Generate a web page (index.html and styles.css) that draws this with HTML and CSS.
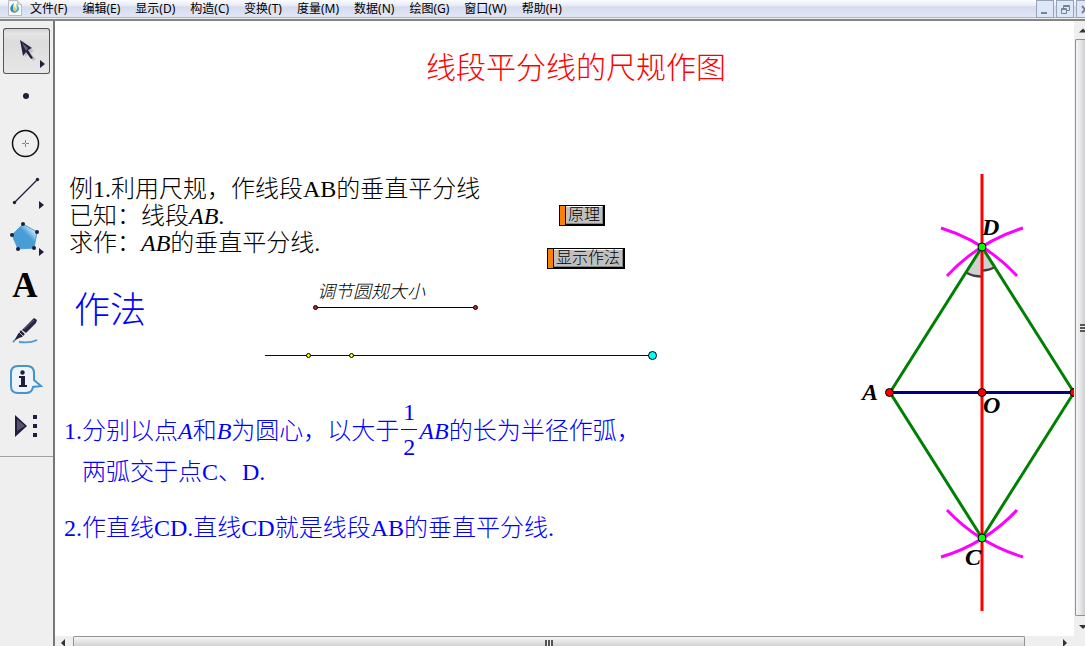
FILE: index.html
```html
<!DOCTYPE html>
<html lang="zh-CN">
<head>
<meta charset="utf-8">
<title>线段平分线的尺规作图</title>
<link rel="stylesheet" href="styles.css">
</head>
<body>
<header class="menubar">
  <svg class="doc-icon" viewBox="0 0 14 16" aria-hidden="true">
    <path d="M.5.5h9l4 4v11H.5z" fill="#f8f8f8" stroke="#b9bcc4"/>
    <path d="M9.500.5v4h4" fill="#ddd" stroke="#c4c4c4"/>
    <path d="M6 3C2 6 1 9 4 12c2 1 4 1 5-1-3 0-5-2-3-8z" fill="#2f86bd"/>
    <path d="M8 4c4 3 4 6 1 8-2 1-3 0-4-1 3 0 5-2 3-7z" fill="#48b8c4"/>
    <path d="M6 6c-2 3-1 5 1 5s2-3-1-5z" fill="#f5cf4b"/>
  </svg>
  <nav class="menus">
    <button>文件(F)</button><button>编辑(E)</button><button>显示(D)</button><button>构造(C)</button><button>变换(T)</button><button>度量(M)</button><button>数据(N)</button><button>绘图(G)</button><button>窗口(W)</button><button>帮助(H)</button>
  </nav>
  <div class="window-buttons">
    <button aria-label="最小化"><svg viewBox="0 0 16 16"><path d="M4 11h6v2H4z" fill="#7a828e"/></svg></button>
    <button aria-label="还原"><svg viewBox="0 0 16 16" fill="none" stroke="#7a828e"><path d="M6.500 7V4.500h6v5H10M6 5.500h7M4.500 7.500h5v5h-5zM4 8.500h6"/></svg></button>
    <button aria-label="关闭"><svg viewBox="0 0 16 16"><path d="M5 5l6 7M11 5l-6 7" stroke="#7a828e" stroke-width="2"/></svg></button>
  </div>
</header>
<main class="workspace">
  <aside class="toolbar">
    <div class="tools">
      <button class="tool selected" aria-label="移动箭头工具"><svg viewBox="0 0 47 46">
        <path d="M19 15l12 8-4 2 6 6-3 2-5-7-3 3z" fill="#888" opacity=".35"/>
        <path d="M17 12l12 8-4 2 5 8-2 1-5-7-3 4z" fill="#26213f"/>
        <path d="M19 15l6 5-2 3z" fill="#67647a"/><path d="M37 32l5 4-5 4z" fill="#211d3c"/></svg></button>
      <button class="tool" aria-label="点工具"><svg viewBox="0 0 47 46"><circle cx="23" cy="21" r="3" fill="#211d3c"/></svg></button>
      <button class="tool" aria-label="圆工具"><svg viewBox="0 0 47 46" fill="none"><circle cx="22.500" cy="21.500" r="13" stroke="#111" stroke-width="1.500"/><path d="M22.500 18v3m0 1v3M19 21.500h3m1 0h3" stroke="#4695cb"/></svg></button>
      <button class="tool" aria-label="线段工具"><svg viewBox="0 0 47 46"><path d="M11.500 33.500l23-23" stroke="#211d3c" stroke-width="1.200"/><circle cx="11.500" cy="33.500" r="1.700" fill="#211d3c"/><circle cx="34.500" cy="10.500" r="1.700" fill="#211d3c"/><path d="M36 32l5 4-5 4z" fill="#211d3c"/></svg></button>
      <button class="tool" aria-label="多边形工具"><svg viewBox="0 0 47 46">
        <defs><linearGradient id="polygon-fill" x1="1" y1="0" x2="0" y2="1"><stop offset=".15" stop-color="#e1f1fb"/><stop offset=".42" stop-color="#489dd6"/></linearGradient></defs>
        <path d="M20 8l14 8-3 16-16 1L9 19z" fill="url(#polygon-fill)" stroke="#4da0d4"/>
        <g fill="#211d3c"><circle cx="20" cy="8" r="2"/><circle cx="34" cy="16" r="2"/><circle cx="31" cy="32" r="2"/><circle cx="15" cy="33" r="2"/><circle cx="9" cy="19" r="2"/><path d="M36 32l5 4-5 4z"/></g></svg></button>
      <button class="tool letter" aria-label="文字工具">A</button>
      <button class="tool" aria-label="标记工具"><svg viewBox="0 0 47 46">
        <path d="M31 8l3 2-1 3-10 10-4-3z" fill="#292542"/><path d="M18 20l4 4-3 3-3 1-5 3 4-7z" fill="#25213d"/>
        <path d="M16 22l4 4M18 20l4 4" stroke="#bbb"/><path d="M21 19l10-9" stroke="#696577"/>
        <path d="M10 32l2-2M16 32c7 1 14 0 18-2" fill="none" stroke="#499bd0" stroke-width="1.800"/></svg></button>
      <button class="tool" aria-label="信息工具"><svg viewBox="0 0 47 46">
        <path d="M15 9h9q7 0 7 7v7l7 6-8 1q-1 6-7 6h-8q-7 0-7-7V16q0-7 7-7z" fill="#edf3f8" stroke="#4394cf" stroke-width="2"/>
        <circle cx="19.500" cy="15.500" r="2.200" fill="#211d3c"/><path d="M16 19h6v9h2v2h-8v-2h2v-7h-2z" fill="#211d3c"/></svg></button>
      <button class="tool" aria-label="自定义工具"><svg viewBox="0 0 47 46"><path d="M12 11l12 11-12 11z" fill="#211d3c"/><path d="M14 15l8 7-8 5z" fill="#55536a"/><path d="M30 11h4v4h-4zm0 9h4v4h-4zm0 9h4v4h-4z" fill="#211d3c"/></svg></button>
    </div>
  </aside>
  <section class="document">
    <div class="canvas">
      <svg class="figure" aria-label="线段 AB 的垂直平分线">
        <g transform="translate(-55 -21)" fill="none">
          <path d="M315 307.500h161" stroke="#000"/>
          <g fill="#d71920" stroke="#000"><circle cx="315.500" cy="307.500" r="2"/><circle cx="475.500" cy="307.500" r="2"/></g>
          <path d="M265 355.500h387" stroke="#00006a"/>
          <g stroke="#000"><circle cx="308.500" cy="355.500" r="2" fill="#ff0"/><circle cx="351.500" cy="355.500" r="2" fill="#ff0"/><circle cx="652.500" cy="355.500" r="4" fill="#0ff"/></g>
          <path d="M982 247l-16 25.500q7 4 16 4zM982 247v23.500q7 0 13-3.500z" fill="#d0d0d0"/>
          <path d="M966 272.500q7 4 16 4M982 270.500q7 0 13-3.500" stroke="#404040" stroke-width="2.500"/>
          <path d="M982 174v437" stroke="#f00" stroke-width="3"/>
          <path d="M890 392.500h184" stroke="#000080" stroke-width="3"/>
          <g stroke="#f0f" stroke-width="3"><path d="M941 228A172.600 172.600 0 0 1 1017 276M947 276A172.600 172.600 0 0 1 1023 228M941 557A172.600 172.600 0 0 0 1017 510M947 510A172.600 172.600 0 0 0 1023 557"/></g>
          <path d="M890 392.500L982 247l92 145.500L982 538z" stroke="#008000" stroke-width="3"/>
          <g stroke="#000"><circle cx="889.500" cy="392.500" r="4" fill="#f00"/><circle cx="982" cy="392.500" r="4" fill="#f00"/><circle cx="1074" cy="392.500" r="4" fill="#f00"/><circle cx="982" cy="247" r="4" fill="#0f0"/><circle cx="982" cy="538" r="4" fill="#0f0"/></g>
          <g class="point-labels"><text x="862" y="400">A</text><text x="982" y="235">D</text><text x="983" y="413">O</text><text x="965" y="565">C</text></g>
        </g>
      </svg>
      <h1 class="title">线段平分线的尺规作图</h1>
      <p class="problem">例1.利用尺规，作线段AB的垂直平分线<br>已知：线段<i>AB</i>.<br>求作：<i>AB</i>的垂直平分线.</p>
      <button class="action principle"><span>原理</span></button>
      <button class="action show-steps"><span>显示作法</span></button>
      <h2 class="method">作法</h2>
      <p class="slider-label">调节圆规大小</p>
      <div class="step step-one"><p>1.分别以点<i>A</i>和<i>B</i>为圆心，以大于<span class="fraction"><span>1</span><span>2</span></span><i>AB</i>的长为半径作弧，</p><p class="continued">两弧交于点C、D.</p></div>
      <p class="step step-two">2.作直线CD.直线CD就是线段AB的垂直平分线.</p>
    </div>
    <div class="vscroll" aria-hidden="true">
      <svg class="arrow" viewBox="0 0 11 18"><path d="M5 11.500l4-4 4 4z" fill="#333"/></svg>
      <div class="vthumb"><i class="vgrip"></i></div>
      <svg class="arrow down" viewBox="0 0 11 20"><path d="M5 9l4 4 4-4z" fill="#333"/></svg>
    </div>
    <div class="hscroll" aria-hidden="true">
      <svg class="side-arrow" viewBox="0 0 18 10"><path d="M10 3v8L6 7z" fill="#333"/></svg>
      <div class="hthumb"><i class="hgrip"></i></div>
      <div class="htrack"><svg class="side-arrow" viewBox="0 0 18 10"><path d="M7 3v8l4-4z" fill="#333"/></svg></div>
    </div>
    <div class="corner"></div>
  </section>
</main>
</body>
</html>
```
FILE: styles.css
```css
*, *::before { box-sizing: border-box; }
body {
  margin: 0;
  height: 100vh;
  display: flex;
  flex-direction: column;
  overflow: hidden;
  background: #f0f0f0;
  font-family: "Noto Sans", "Noto Sans CJK SC", sans-serif;
}
button { margin: 0; padding: 0; border: 0; background: none; color: #000; font: inherit; }
svg { display: block; }
h1, h2, p { margin: 0; font-weight: 400; }

.menubar {
  flex: none;
  display: flex;
  height: 18px;
  padding-left: 8px;
  background: linear-gradient(#fbfcfe, #e6eaf5 35%, #d5dbed 40%, #e2e7f6);
  border-bottom: 1px solid #b3b7c8;
}
.doc-icon { width: 14px; height: 16px; }
.menus { display: flex; flex: 1; }
.menus button { padding: 0 7px 0 8px; font-size: 12px; line-height: 17px; white-space: nowrap; }
.window-buttons { display: flex; gap: 2px; margin-right: -9px; }
.window-buttons button { width: 18px; height: 18px; border: 1px solid #98a4b5; background: #dce8f7; }
.window-buttons svg { width: 16px; height: 16px; }

.workspace { flex: 1; display: flex; min-height: 0; margin-top: 1px; border-top: 2px solid #858585; }
.toolbar { flex: none; width: 55px; padding: 7px 0 0 3px; background: #efefef; border-right: 2px solid #777; }
.tools { display: flex; flex-direction: column; gap: 1px; margin-left: -3px; padding: 0 0 6px 3px; border-bottom: 1px solid #a0a0a0; }
.tool { display: block; width: 47px; height: 46px; }
.tool svg { width: 47px; height: 46px; }
.selected { border-radius: 3px; background: linear-gradient(#cfcfcf, #e5e5e5 12%, #dcdcdc 30%, #e7e7e7); box-shadow: inset 0 0 0 1px #555; }
.letter { padding-right: 3px; font: bold 35px/46px "Liberation Serif", serif; }

.document { flex: 1; min-width: 0; display: grid; grid-template-columns: minmax(0, 1fr) 11px; grid-template-rows: minmax(0, 1fr) 10px; background: #fff; }
.canvas { position: relative; overflow: hidden; background: #fff; font-family: "Liberation Serif", "Noto Sans CJK SC Light", "Noto Sans CJK SC", serif; }
.figure { position: absolute; inset: 0; width: 100%; height: 100%; }
.point-labels { fill: #000; font: italic bold 24px "Liberation Serif", serif; }
.title, .problem, .method, .slider-label, .step, .action { position: absolute; white-space: nowrap; }
.title { left: 371px; top: 27px; color: #f00; font-size: 30px; line-height: 40px; }
.problem { left: 14px; top: 155px; font-size: 24px; line-height: 27px; }
.method { left: 19px; top: 266px; color: #00f; font-size: 36px; line-height: 48px; }
.slider-label { left: 262px; top: 259px; font-size: 18px; line-height: 24px; font-style: italic; }
.step { color: #00f; font-size: 24px; line-height: 28px; }
.step-one { left: 9px; top: 374px; }
.step-two { left: 9px; top: 493px; }
.continued { padding-left: 18px; }
.fraction { display: inline-flex; flex-direction: column; width: 16px; margin: 0 2px -6px; vertical-align: 19px; text-align: center; }
.fraction span { line-height: 34px; }
.fraction span + span { border-top: 1px solid #00f; }
.action { height: 21px; border: 1px solid #000; border-right-width: 2px; border-bottom-width: 2px; border-left: 0; background: #c0c0c0; font: 400 16px/18px "Liberation Serif", "Noto Sans CJK SC Light", "Noto Sans CJK SC", serif; }
.action span { display: block; height: 18px; padding: 0 2px; border: 1px solid #fff; border-bottom-color: #888; border-right-color: #888; line-height: 16px; }
.action::before { content: ""; position: absolute; left: -6px; top: -1px; width: 7px; height: 21px; border: 1px solid #000; background: #ff8000; }
.principle { left: 510px; top: 184px; }
.show-steps { left: 498px; top: 227px; }

.vscroll { display: flex; flex-direction: column; background: #efefef; overflow: hidden; }
.arrow { flex: none; width: 11px; height: 18px; }
.down { height: 20px; }
.vthumb { flex: 1; display: flex; align-items: center; margin-left: 1px; padding-left: 4px; border: 1px solid #929292; border-right: 0; border-radius: 2px 0 0 2px; background: linear-gradient(90deg, #f6f6f6, #e6e6e6 50%, #cfcfd3); }
.vgrip { width: 6px; height: 8px; background: repeating-linear-gradient(#555 0 2px, #eee 2px 3px); }
.hscroll { display: flex; background: #efefef; overflow: hidden; }
.side-arrow { flex: none; width: 18px; height: 10px; }
.hthumb { flex: 952; display: flex; justify-content: center; padding-top: 3px; border: 1px solid #929292; border-bottom: 0; border-radius: 2px 2px 0 0; background: linear-gradient(#f6f6f6, #e5e5e5 50%, #d2d2d4); }
.hgrip { width: 8px; height: 6px; background: repeating-linear-gradient(90deg, #555 0 2px, #eee 2px 3px); }
.htrack { flex: 49; display: flex; justify-content: flex-end; }
.corner { background: #efefef; }
```
